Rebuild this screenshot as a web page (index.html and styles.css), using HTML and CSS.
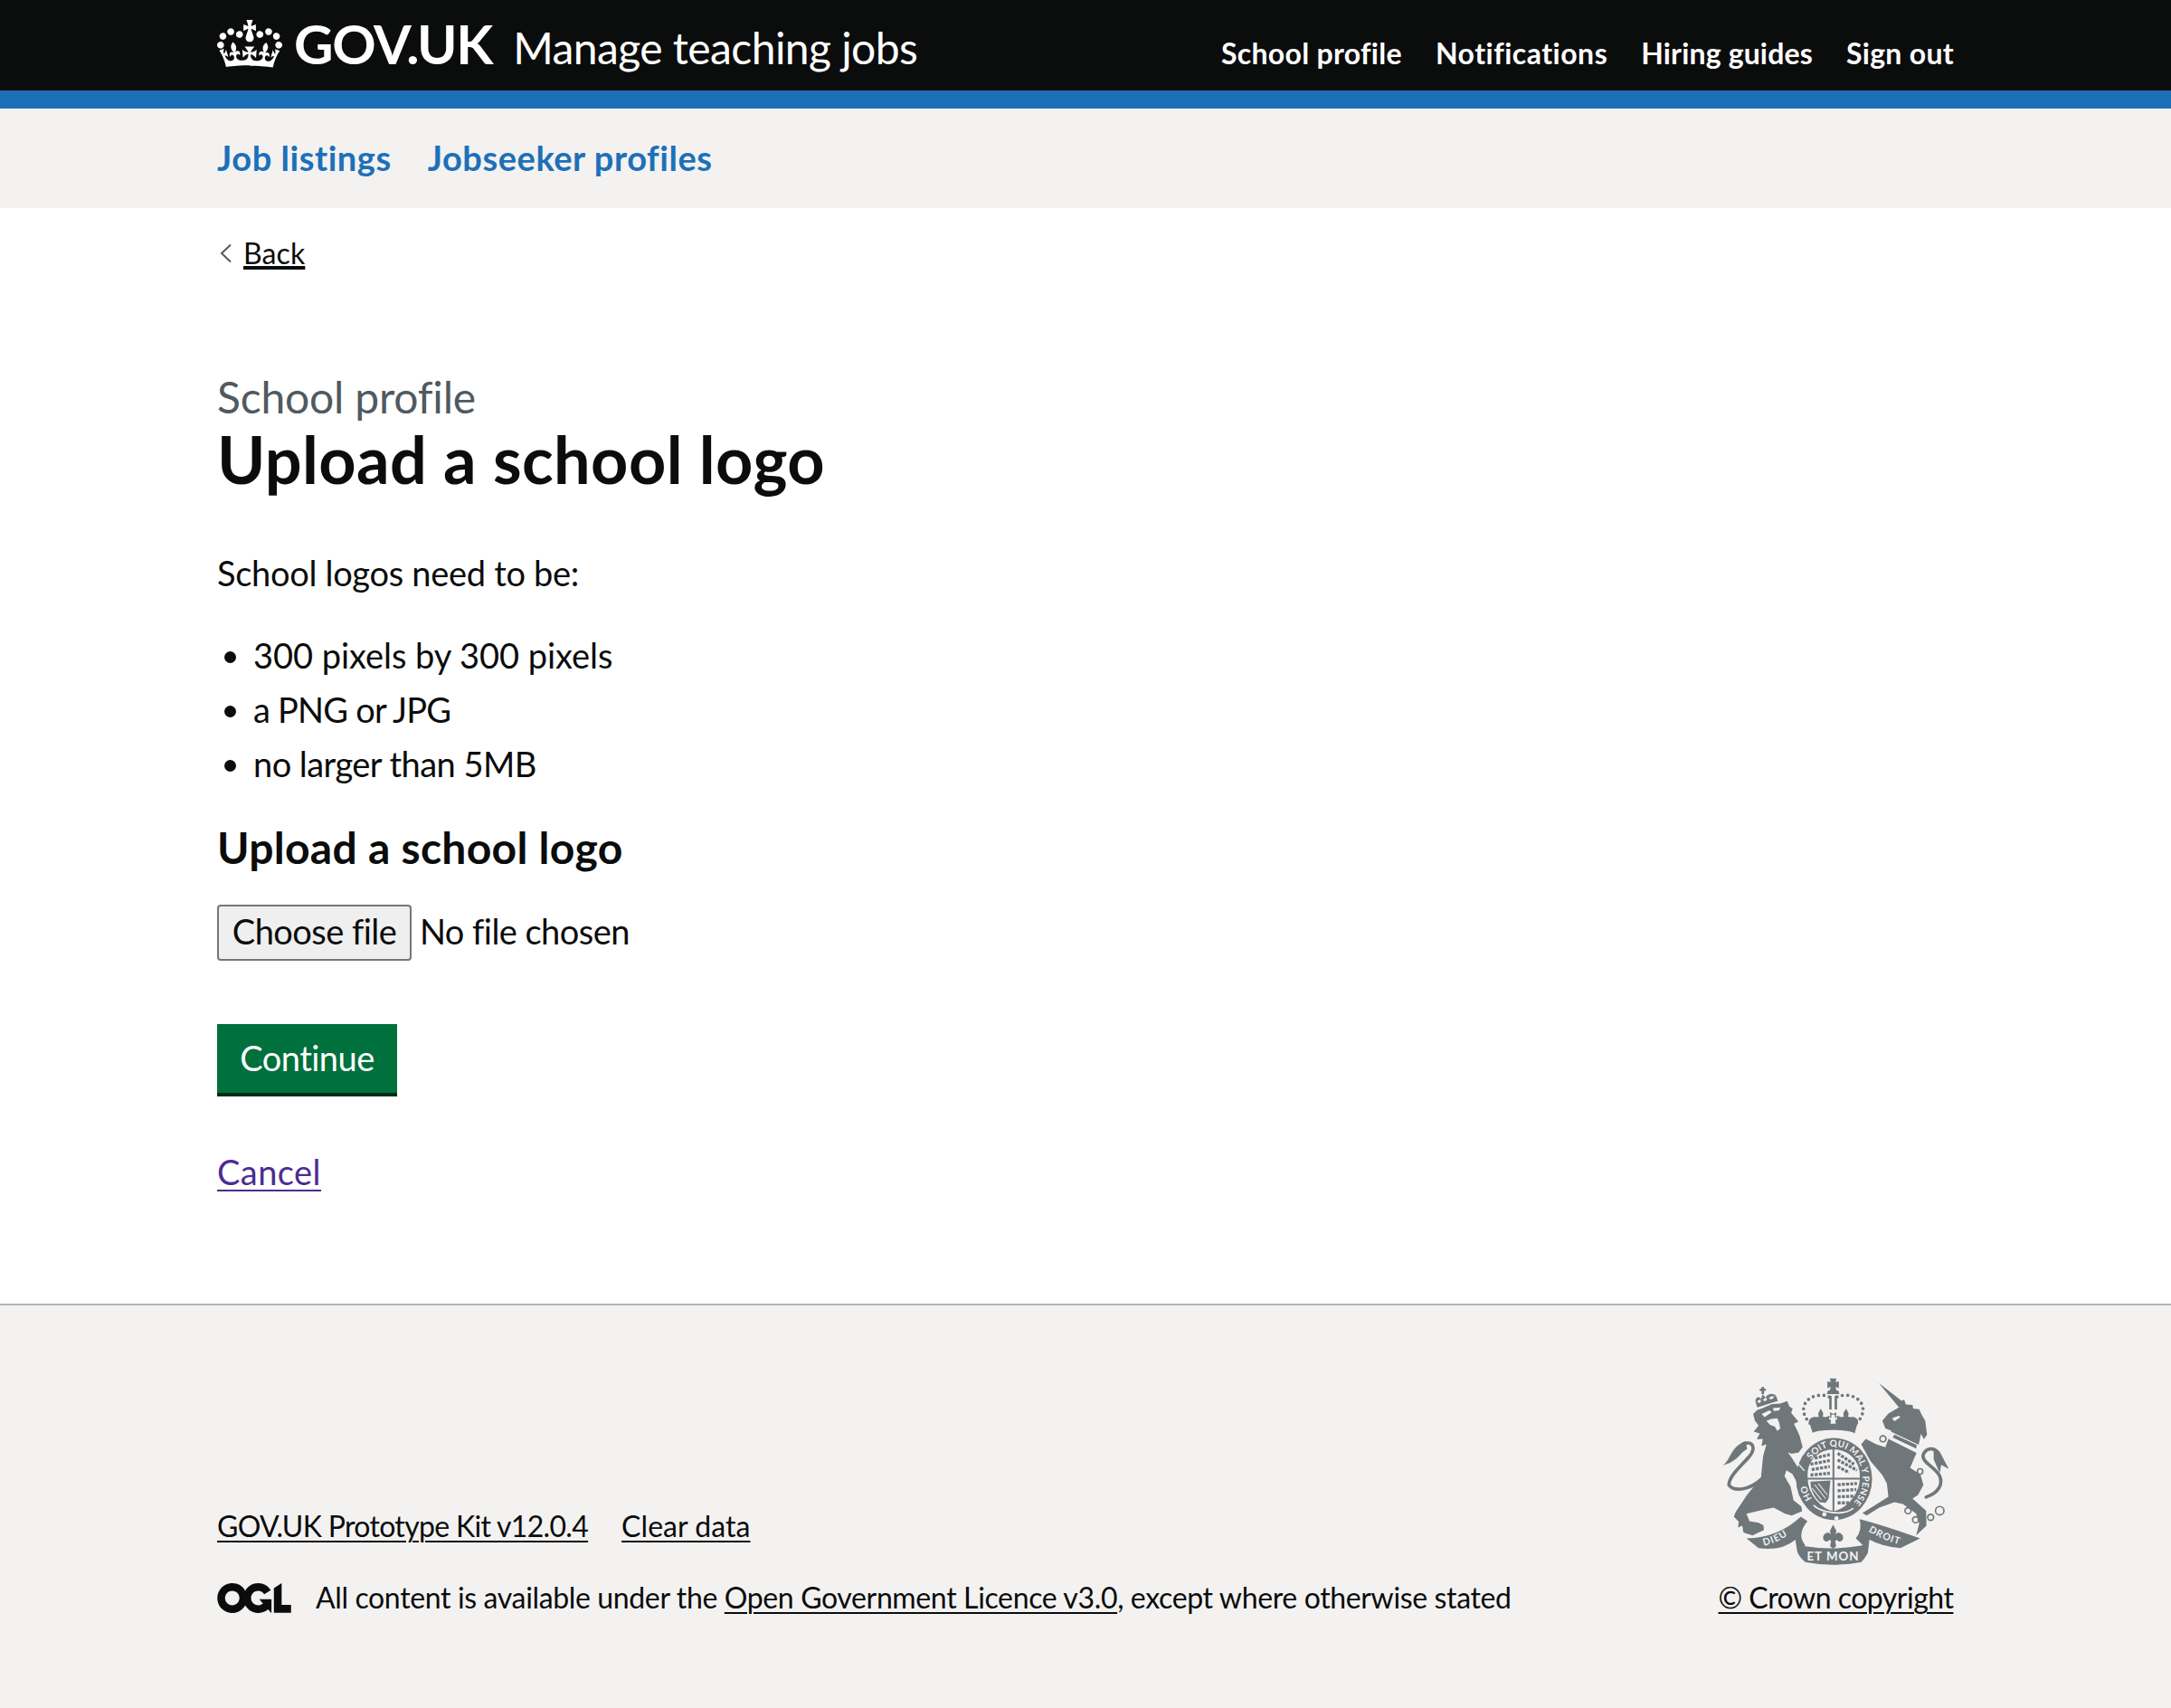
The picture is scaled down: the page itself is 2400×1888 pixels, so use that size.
FILE: index.html
```html
<!DOCTYPE html>
<html lang="en">
<head>
<meta charset="utf-8">
<title>Upload a school logo</title>
<link rel="stylesheet" href="styles.css">
</head>
<body>
<header class="header">
  <div class="wrap header-row">
    <a class="logo" href="#">
      <svg class="crown" viewBox="0 0 132 97" aria-hidden="true"><path d="M25 30.2c3.5 1.5 7.7-.2 9.1-3.7 1.5-3.6-.2-7.8-3.9-9.2-3.6-1.4-7.6.3-9.1 3.9-1.4 3.5.3 7.5 3.9 9zM9 39.5c3.6 1.5 7.8-.2 9.2-3.7 1.5-3.6-.2-7.8-3.9-9.1-3.6-1.5-7.6.2-9.1 3.8-1.4 3.5.3 7.5 3.8 9zM4.4 57.2c3.5 1.5 7.7-.2 9.1-3.8 1.5-3.6-.2-7.7-3.9-9.1-3.6-1.5-7.6.3-9.1 3.8-1.4 3.5.3 7.6 3.9 9.1zm38.3-21.4c3.5 1.5 7.7-.2 9.1-3.8 1.5-3.6-.2-7.7-3.9-9.1-3.6-1.5-7.6.3-9.1 3.8-1.3 3.6.4 7.7 3.9 9.1zm64.4-5.6c-3.6 1.5-7.8-.2-9.1-3.7-1.5-3.6.2-7.8 3.8-9.2 3.6-1.4 7.7.3 9.2 3.9 1.3 3.5-.4 7.5-3.9 9zm15.9 9.3c-3.6 1.5-7.7-.2-9.1-3.7-1.5-3.6.2-7.8 3.7-9.1 3.6-1.5 7.7.2 9.2 3.8 1.5 3.5-.3 7.5-3.8 9zm4.7 17.7c-3.6 1.5-7.8-.2-9.2-3.8-1.5-3.6.2-7.7 3.9-9.1 3.6-1.5 7.7.3 9.2 3.8 1.3 3.5-.4 7.6-3.9 9.1zM89.3 35.8c-3.6 1.5-7.8-.2-9.2-3.8-1.4-3.6.2-7.7 3.9-9.1 3.6-1.5 7.7.3 9.2 3.8 1.4 3.6-.3 7.7-3.9 9.1zM69.7 17.7l8.9 4.7V9.3l-8.9 2.8c-.2-.3-.5-.6-.9-.9L72.4 0H59.6l3.6 11.2c-.3.3-.6.5-.9.9l-8.8-2.8v13.1l8.8-4.7c.3.3.6.7.9.9l-5 15.4v.1c-.2.8-.4 1.6-.4 2.4 0 4.1 3.1 7.5 7 8.1h.2c.3 0 .7.1 1 .1.4 0 .7 0 1-.1h.2c4-.6 7.1-4.1 7.1-8.1 0-.8-.1-1.7-.4-2.4V34l-5.1-15.4c.4-.2.7-.6 1-.9zM66 92.8c16.9 0 32.8 1.1 47.1 3.2 4-16.9 8.9-26.7 14-33.5l-9.6-3.4c1 4.9 1.1 7.2 0 10.2-1.5-1.4-3-4.3-4.2-8.7L108.6 76c2.8-2 5-3.2 7.5-3.3-4.4 9.4-10 11.9-13.6 11.2-4.3-.8-6.3-4.6-5.6-7.9 1-4.7 5.7-5.9 8-.5 4.3-8.7-3-11.4-7.6-8.8 7.1-7.2 7.9-13.5 2.1-21.1-8 6.1-8.1 12.3-4.5 20.8-4.7-5.4-12.1-2.5-9.5 6.2 3.4-5.2 7.9-2 7.2 3.1-.6 4.3-6.4 7.8-13.5 7.2-10.3-.9-10.9-8-11.2-13 2.5-.5 7.1 1.8 11 7.3L80.2 60c-4.1 4.4-8 5.3-12.3 5.4 1.4-4.4 8-11.6 8-11.6H55.5s6.4 7.2 7.9 11.6c-4.2-.1-8-1-12.3-5.4l1.4 16.4c3.9-5.5 8.5-7.7 10.9-7.3-.3 5.1-.8 12.2-11.1 13-7.2.6-12.9-2.9-13.5-7.2-.7-5 3.8-8.3 7.1-3.1 2.7-8.7-4.6-11.6-9.4-6.2 3.7-8.5 3.6-14.7-4.6-20.8-5.8 7.6-5 13.9 2.2 21.1-4.7-2.6-11.9.1-7.7 8.8 2.3-5.5 7.1-4.2 8.1.5.7 3.3-1.3 7.1-5.7 7.9-3.5.7-9-1.8-13.5-11.2 2.5.1 4.7 1.3 7.5 3.3l-4.7-15.4c-1.2 4.4-2.7 7.2-4.3 8.7-1.1-3-.9-5.3 0-10.2l-9.5 3.4c5 6.9 9.9 16.7 14 33.5 14.8-2.1 30.8-3.2 47.7-3.2z"/></svg>
      <span class="logo-text">GOV.UK</span>
      <span class="service">Manage teaching jobs</span>
    </a>
    <nav class="top-nav">
      <a href="#">School profile</a>
      <a class="nav-wide" href="#">Notifications</a>
      <a class="nav-tight" href="#">Hiring guides</a>
      <a href="#">Sign out</a>
    </nav>
  </div>
</header>

<nav class="sub-nav">
  <div class="wrap sub-nav-row">
    <a href="#">Job listings</a>
    <a href="#">Jobseeker profiles</a>
  </div>
</nav>

<main class="wrap main">
  <a class="back" href="#">
    <svg class="chevron" viewBox="0 0 14 22" aria-hidden="true"><path d="M12 1.5 2 11l10 9.5"/></svg>
    <span>Back</span>
  </a>
  <span class="caption">School profile</span>
  <h1 class="title">Upload a school logo</h1>
  <p class="body">School logos need to be:</p>
  <ul class="list">
    <li class="item-wide">300 pixels by 300 pixels</li>
    <li class="item-tight">a PNG or JPG</li>
    <li class="item-mid">no larger than 5MB</li>
  </ul>
  <label class="label" for="logo">Upload a school logo</label>
  <div class="file-row">
    <input class="file-input" id="logo" type="file">
    <label class="file-button" for="logo">Choose file</label>
    <span class="file-name">No file chosen</span>
  </div>
  <button class="continue" type="button">Continue</button>
  <p class="cancel-row"><a class="cancel" href="#">Cancel</a></p>
</main>

<footer class="footer">
  <div class="wrap footer-row">
    <div class="footer-left">
      <div class="footer-links">
        <a class="kit" href="#">GOV.UK Prototype Kit v12.0.4</a>
        <a class="clear" href="#">Clear data</a>
      </div>
      <div class="licence">
        <svg class="ogl" viewBox="0 0 483.2 195.7" aria-hidden="true"><path d="M421.5 142.8V.1l-50.7 32.3v161.1h112.4v-50.7zm-122.3-9.6A47.12 47.12 0 0 1 221 97.8c0-26 21.1-47.1 47.1-47.1 16.7 0 31.4 8.7 39.7 21.8l42.7-27.2A97.63 97.63 0 0 0 268.1 0c-36.5 0-68.3 20.1-85.1 49.7A98 98 0 0 0 97.8 0C43.9 0 0 43.9 0 97.8s43.9 97.8 97.8 97.8c36.5 0 68.3-20.1 85.1-49.7a97.76 97.76 0 0 0 149.6 25.4l19.4 22.2h3v-87.8h-80l24.3 27.5zM97.8 145c-26 0-47.1-21.1-47.1-47.1s21.1-47.2 47.1-47.2 47.2 21.2 47.2 47.2-21.2 47.1-47.2 47.1"/></svg>
        <span>All content is available under the <a href="#">Open Government Licence v3.0</a>, except where otherwise stated</span>
      </div>
    </div>
    <div class="footer-right">
      <svg class="crest" viewBox="70 70 755 620" aria-hidden="true">
        <defs>
          <path id="garter" d="M367 470A94 107 0 1 1 492 494"/>
          <path id="dieu" d="M208 626Q268 612 314 570"/>
          <path id="droit" d="M553 578Q605 610 672 626"/>
        </defs>
        <g class="crest-ink">
          <!-- lion crown -->
          <path d="M180 150 248 130 254 146 186 168Z"/>
          <path d="M180 150C178 136 190 128 198 140L204 124 212 136C220 122 238 118 248 130Z"/>
          <path d="M200 100H208V106H214V113H208V124H200V113H194V106H200Z"/>
          <!-- lion -->
          <path d="M172 190 186 176 200 172 235 157 262 155 285 147 292 165 303 172 298 186 322 215 307 222 316 240 326 262 332 285 336 300 322 318 292 322 340 398 346 426 322 426 302 388 282 376 276 396 296 430 306 476 332 496 334 512 300 526 278 520 240 500 210 506 150 520 160 545 190 550 206 558 208 574 170 592 140 582 136 560 122 566 124 546 108 530 114 515 150 460 198 400 205 330 216 290 200 296 204 272 184 274 194 254 174 248 190 228 178 212Z"/>
          <path d="M72 360C100 340 95 300 148 280L152 306C125 320 125 345 72 360Z"/>
          <!-- royal crown -->
          <path d="M426 72H448L445 84 456 82V104L445 100 448 112H426L429 100 418 104V82L429 84ZM420 112H454L458 124H416ZM424 130H432V175H424ZM442 130H450V175H442Z"/>
          <path d="M356 212C370 190 380 205 390 198 384 186 392 182 396 172 400 182 408 186 402 198 415 205 420 192 428 198L426 184 437 190 448 184 446 198C455 192 460 205 473 198 467 186 475 182 480 172 484 182 492 186 486 198 497 205 507 190 520 212L508 255C465 240 410 240 370 255Z"/>
          <!-- garter ring -->
          <ellipse cx="440" cy="405" rx="126" ry="136"/>
          <!-- ribbons -->
          <path d="M150 602Q255 600 330 530L352 545Q315 590 345 625L322 648 312 606Q265 645 190 634Z"/>
          <path d="M312 606Q325 628 345 628 437 642 530 626 548 622 558 598L552 650Q540 672 530 680 437 698 345 680 325 665 318 645Z"/>
          <path d="M525 538Q610 560 725 602L660 634Q600 630 555 605L552 640 512 602Q534 575 525 538Z"/>
          <!-- unicorn -->
          <path d="M588 87 664 146 672 142 678 158 700 160 702 172 722 174 730 192 742 212 748 258 738 274 728 256 716 312 692 368 726 390 736 425 718 458 700 470 745 510 746 560 712 592 722 552 712 520 668 488 640 482 590 500 548 526 534 518 588 484 620 464 615 420 600 392 560 345 530 290 545 272 580 290 610 300 630 245 610 238 600 212 620 188 655 168Z"/>
          <path d="M770 300 790 315 820 372 795 358 790 385 770 340Z"/>
          <!-- fleur -->
          <path d="M437 556 448 578 444 588C456 576 472 588 470 602 468 614 454 616 450 606L444 610 447 628 437 636 427 628 430 610 424 606C420 616 406 614 404 602 402 588 418 576 430 588L426 578Z"/>
        </g>
        <g class="crest-line">
          <path d="M140 288C175 278 180 305 160 330 130 365 92 395 92 425 110 448 160 442 200 405"/>
          <path d="M745 465C790 450 800 420 790 395 775 365 730 350 735 325 745 300 770 300 785 318"/>
          <path class="crest-dots" d="M424 133C395 120 350 130 340 165 335 190 350 210 362 222M450 133C480 120 525 130 535 165 540 190 525 210 512 222"/>
        </g>
        <g class="crest-hoops">
          <circle cx="602" cy="272" r="10"/>
          <circle cx="592" cy="355" r="10"/>
          <circle cx="725" cy="380" r="9"/>
          <circle cx="718" cy="425" r="7"/>
          <circle cx="695" cy="460" r="6"/>
          <circle cx="685" cy="510" r="10"/>
          <circle cx="710" cy="540" r="10"/>
          <circle cx="760" cy="532" r="10"/>
          <circle cx="790" cy="510" r="14"/>
        </g>
        <g class="crest-paper">
          <!-- lion face -->
          <path d="M200 190 226 178 234 184 210 200Z"/>
          <path d="M238 170 262 168 258 178 240 180Z"/>
          <path d="M216 212 232 206 252 204 258 218 262 238 252 246 244 232 228 226Z"/>
          <!-- lion crown gaps -->
          <path d="M186 146 196 142 198 150 190 154ZM206 140 216 136 218 144 208 148ZM226 134 238 130 240 138 228 142Z"/>
          <!-- crown band -->
          <path d="M364 264C362 250 380 244 438 243 496 244 514 250 512 264 490 258 385 258 364 264Z"/>
          <path d="M424 198 430 204 432 192 442 192 444 204 450 198 450 208 444 210 446 222 428 222 430 210 424 208Z"/>
          <!-- unicorn collar -->
          <path d="M628 248 725 294 716 320 620 272Z"/>
          <path d="M632 204 654 196 660 200 640 214Z"/>
          <!-- arm highlight -->
          <path class="arm" d="M290 318 342 378"/>
          <!-- buckle -->
          <circle cx="408" cy="522" r="7"/>
          <circle cx="448" cy="535" r="7"/>
        </g>
        <path class="collar-marks" d="M640 258 714 292 712 304 634 268Z"/>
        <path class="crest-shield" d="M350 400C346 345 385 306 438 304 492 306 530 345 528 400 528 450 490 505 438 514 400 508 350 460 350 400Z"/>
        <g class="quarter">
          <path d="M376 336 426 324M362 356 426 344M366 374 426 364M362 392 426 386"/>
          <path d="M452 320 506 356M452 342 516 376M452 364 490 384"/>
          <path d="M452 424 516 420M452 444 514 440M452 464 506 462M452 484 490 484"/>
        </g>
        <path class="harp" d="M362 414 428 410 422 470 412 484 392 482C376 465 362 445 362 414Z"/>
        <path class="harp-lines" d="M376 424 412 470M388 420 418 458M368 436 398 474"/>
        <path class="crest-cross" d="M438 304V514M350 404H528"/>
        <path class="crest-sash" d="M372 492C395 515 470 530 504 502"/>
        <g class="crest-type">
          <text class="ring-text"><textPath href="#garter">HO&#160;&#160;&#160;&#160;&#160;&#160;&#160;&#160;&#160;&#160;&#160;SOIT QUI MAL Y PENSE</textPath></text>
          <text class="ribbon-text"><textPath href="#dieu">DIEU</textPath></text>
          <text class="ribbon-text"><textPath href="#droit">DROIT</textPath></text>
          <text class="ribbon-text mon" x="350" y="674">ET MON</text>
        </g>
      </svg>
      <a class="copyright" href="#">© Crown copyright</a>
    </div>
  </div>
</footer>
</body>
</html>
```
FILE: styles.css
```css
* { box-sizing: border-box; }

html, body { margin: 0; padding: 0; }

body {
  min-height: 1888px;
  display: flex;
  flex-direction: column;
  font-family: Lato, "Liberation Sans", sans-serif;
  color: #0b0c0c;
  background: #fff;
}

.wrap { width: 1920px; margin: 0 auto; }

/* Header */
.header {
  height: 120px;
  padding-top: 8px;
  background: #0b0c0c;
  border-bottom: 20px solid #1d70b8;
}
.header-row { display: flex; justify-content: space-between; align-items: baseline; }
.logo {
  display: flex;
  align-items: baseline;
  color: #fff;
  text-decoration: none;
}
.crown { width: 72px; height: 53px; align-self: flex-start; margin-top: 14px; fill: #fff; }
.logo-text {
  margin-left: 13px;
  font-size: 60px;
  line-height: 80px;
  font-weight: 700;
  letter-spacing: -1.3px;
}
.service {
  margin-left: 23px;
  font-size: 48px;
  line-height: 80px;
  letter-spacing: -0.57px;
}
.top-nav { display: flex; gap: 37px; }
.top-nav a {
  color: #fff;
  font-size: 32px;
  line-height: 40px;
  font-weight: 700;
  letter-spacing: 0.3px;
  text-decoration: none;
}
.top-nav .nav-wide { letter-spacing: 0.5px; }
.top-nav .nav-tight { letter-spacing: 0.15px; }

/* Secondary navigation */
.sub-nav { height: 110px; padding-top: 29px; background: #f3f2f1; }
.sub-nav-row { display: flex; gap: 40px; }
.sub-nav-row a {
  color: #1d70b8;
  font-size: 38px;
  line-height: 50px;
  font-weight: 700;
  letter-spacing: 0.55px;
  text-decoration: none;
}

/* Main */
.main { display: flex; flex-direction: column; align-items: flex-start; padding-bottom: 122px; }
.back {
  display: flex;
  align-items: center;
  gap: 12px;
  margin: 30px 0 0 3px;
  color: #0b0c0c;
  font-size: 32px;
  line-height: 40px;
  letter-spacing: 0.1px;
}
.back span { text-decoration: underline; text-decoration-thickness: 2px; text-underline-offset: 4px; }
.chevron { width: 14px; height: 22px; fill: none; stroke: #505a5f; stroke-width: 2; }
.caption {
  display: block;
  margin-top: 111px;
  color: #505a5f;
  font-size: 48px;
  line-height: 56px;
  letter-spacing: -0.2px;
}
.title {
  margin: 0;
  font-size: 72px;
  line-height: 80px;
  font-weight: 700;
  letter-spacing: 0.4px;
}
.body { margin: 61px 0 0; font-size: 38px; line-height: 50px; letter-spacing: -0.3px; }
.list {
  margin: 41px 0 0;
  padding: 0 0 0 40px;
  font-size: 38px;
  line-height: 50px;
}
.list li { margin-bottom: 10px; }
.item-wide { letter-spacing: -0.05px; }
.item-tight { letter-spacing: -0.8px; }
.item-mid { letter-spacing: -0.55px; }
.label {
  display: block;
  margin-top: 28px;
  font-size: 48px;
  line-height: 60px;
  font-weight: 700;
  letter-spacing: 0.29px;
}
.file-row {
  display: flex;
  gap: 9px;
  height: 62px;
  margin-top: 33px;
  font-size: 38px;
  line-height: 59px;
  letter-spacing: -0.55px;
}
.file-input { position: absolute; width: 1px; height: 1px; opacity: 0; }
.file-button {
  width: 215px;
  height: 62px;
  border: 2px solid #767676;
  border-radius: 4px;
  background: #efefef;
  text-align: center;
  line-height: 55px;
}
.continue {
  width: 199px;
  height: 76px;
  margin-top: 70px;
  padding: 0 0 2px;
  border: 0;
  background: #00703c;
  box-shadow: 0 4px 0 #002d18;
  color: #fff;
  font-family: Lato, "Liberation Sans", sans-serif;
  font-size: 38px;
  line-height: 50px;
  letter-spacing: -0.54px;
}
.cancel-row { margin: 62px 0 0; font-size: 38px; line-height: 50px; letter-spacing: 0.45px; }
.cancel { color: #4c2c92; text-decoration-thickness: 2px; text-underline-offset: 5px; }

/* Footer */
.footer {
  flex: 1;
  margin-top: -1px;
  padding: 80px 0 102px;
  background: #f3f2f1;
  border-top: 2px solid #b1b4b6;
}
.footer-row { display: flex; justify-content: space-between; align-items: flex-end; }
.footer-left, .footer-right { font-size: 32px; line-height: 40px; letter-spacing: -0.36px; }
.footer a { color: #0b0c0c; text-decoration-thickness: 2px; text-underline-offset: 4px; }
.footer-links { display: flex; gap: 37px; margin-bottom: 39px; }
.footer-links .kit { letter-spacing: -0.68px; }
.footer-links .clear { letter-spacing: 0.05px; }
.licence { display: flex; align-items: center; gap: 27px; }
.ogl { width: 82px; height: 33px; fill: #0b0c0c; }
.footer-right { display: flex; flex-direction: column; align-items: center; width: 261px; }
.crest { display: block; width: 252px; height: 207px; margin-bottom: 16px; }
.copyright { letter-spacing: -0.5px; white-space: nowrap; }

/* Crest */
.crest-ink { fill: #6f777b; }
.crest-line { fill: none; stroke: #6f777b; stroke-width: 11; stroke-linecap: round; }
.crest-dots { stroke-width: 11; stroke-dasharray: 0 18; }
.crest-hoops { fill: none; stroke: #6f777b; stroke-width: 5; }
.crest-paper { fill: #f3f2f1; }
.crest-paper .arm { fill: none; stroke: #f3f2f1; stroke-width: 4; }
.collar-marks { fill: #6f777b; }
.crest-shield { fill: #f3f2f1; stroke: #6f777b; stroke-width: 5; }
.quarter { fill: none; stroke: #6f777b; stroke-width: 10; stroke-dasharray: 10 4; }
.harp { fill: #6f777b; }
.harp-lines { fill: none; stroke: #f3f2f1; stroke-width: 3; }
.crest-cross { fill: none; stroke: #6f777b; stroke-width: 6; }
.crest-sash { fill: none; stroke: #f3f2f1; stroke-width: 5; }
.crest-type { fill: #f3f2f1; font-family: Lato, sans-serif; font-weight: 700; letter-spacing: 1px; }
.ring-text { font-size: 30px; letter-spacing: 0.6px; white-space: pre; }
.ribbon-text { font-size: 32px; letter-spacing: 3px; }
.mon { font-size: 40px; letter-spacing: 3px; }
```
